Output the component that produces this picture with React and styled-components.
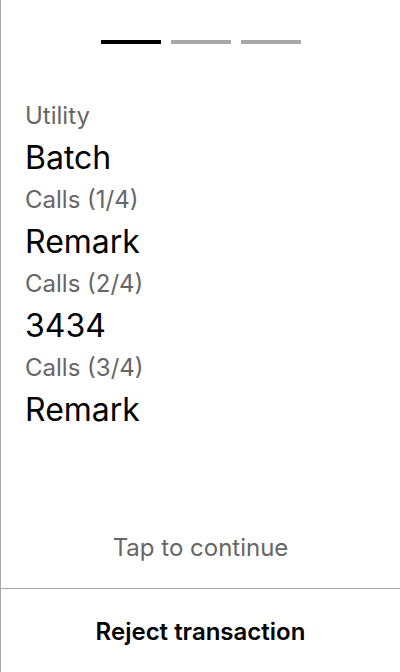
import React from 'react'
import styled, { createGlobalStyle } from 'styled-components'

const GlobalStyle = createGlobalStyle`
  html, body {
    margin: 0;
    padding: 0;
    background: #fff;
  }
  body {
    font-family: Inter, 'Noto Sans', sans-serif;
  }
`

const Screen = styled.div`
  height: 672px;
  box-sizing: border-box;
  border-left: 1px solid #a8a8a8;
  display: flex;
  flex-direction: column;
`

const Progress = styled.div`
  display: flex;
  justify-content: center;
  gap: 10px;
  padding-top: 40px;
`

const Step = styled.div`
  width: 60px;
  height: 4px;
  background: ${props => (props.active ? '#000' : '#a8a8a8')};
`

const Body = styled.div`
  flex: 1;
  padding: 52px 24px 0;
`

const Label = styled.div`
  font-size: 24px;
  line-height: 40px;
  color: #666;
`

const Value = styled.div`
  font-size: 32px;
  line-height: 44px;
  color: #000;
`

const Hint = styled.div`
  text-align: center;
  font-size: 24px;
  line-height: 24px;
  color: #666;
  padding-bottom: 28px;
`

const Footer = styled.button`
  border: 0;
  border-top: 1px solid #a8a8a8;
  background: none;
  height: 84px;
  padding: 2px 0 0;
  font-family: inherit;
  font-size: 24px;
  font-weight: 600;
  color: #000;
  cursor: pointer;
`

const items = [
  ['Utility', 'Batch'],
  ['Calls (1/4)', 'Remark'],
  ['Calls (2/4)', '3434'],
  ['Calls (3/4)', 'Remark'],
]

export default function App() {
  return (
    <>
      <GlobalStyle />
      <Screen>
        <Progress>
          <Step active />
          <Step />
          <Step />
        </Progress>
        <Body>
          {items.map(([label, value], i) => (
            <React.Fragment key={i}>
              <Label>{label}</Label>
              <Value>{value}</Value>
            </React.Fragment>
          ))}
        </Body>
        <Hint>Tap to continue</Hint>
        <Footer>Reject transaction</Footer>
      </Screen>
    </>
  )
}
